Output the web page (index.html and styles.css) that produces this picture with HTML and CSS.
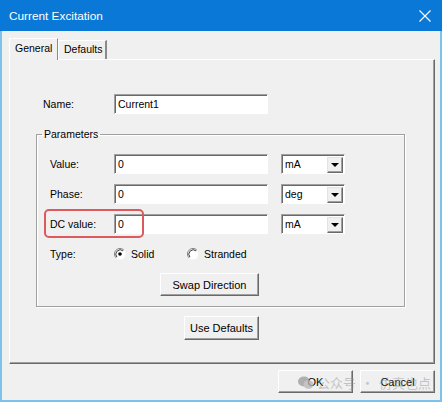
FILE: index.html
```html
<!DOCTYPE html>
<html>
<head>
<meta charset="utf-8">
<link rel="stylesheet" href="styles.css">
</head>
<body>
<div class="window">
  <div class="titlebar">
    <span class="title">Current Excitation</span>
    <svg class="close" width="12" height="12" viewBox="0 0 12 12"><path d="M0.5 0.5 L11.5 11.5 M11.5 0.5 L0.5 11.5" stroke="#fff" stroke-width="1.1" fill="none"/></svg>
  </div>
  <div class="client">
    <div class="tabs">
      <div class="tab active">General</div>
      <div class="tab">Defaults</div>
    </div>
    <div class="panel">
      <div class="name-row">
        <span class="lbl name-lbl">Name:</span>
        <div class="edit">Current1</div>
      </div>
      <fieldset class="group">
        <legend>Parameters</legend>
        <div class="grid">
          <span class="lbl">Value:</span>
          <div class="edit">0</div>
          <div class="combo"><span>mA</span><span class="drop"><i></i></span></div>

          <span class="lbl">Phase:</span>
          <div class="edit">0</div>
          <div class="combo"><span>deg</span><span class="drop"><i></i></span></div>

          <span class="lbl">DC value:</span>
          <div class="edit">0</div>
          <div class="combo"><span>mA</span><span class="drop"><i></i></span></div>

          <span class="lbl">Type:</span>
          <div class="radios">
            <span class="radio on"><svg width="12" height="12" viewBox="0 0 12 12"><circle cx="6" cy="6" r="5.5" fill="#fff"/><path d="M2.1 9.9 A5.5 5.5 0 0 1 9.9 2.1" stroke="#808080" stroke-width="1" fill="none"/><path d="M2.9 9.1 A4.4 4.4 0 0 1 9.1 2.9" stroke="#404040" stroke-width="1" fill="none"/><circle cx="6" cy="6" r="1.8" fill="#000"/></svg>Solid</span>
            <span class="radio"><svg width="12" height="12" viewBox="0 0 12 12"><circle cx="6" cy="6" r="5.5" fill="#fff"/><path d="M2.1 9.9 A5.5 5.5 0 0 1 9.9 2.1" stroke="#808080" stroke-width="1" fill="none"/><path d="M2.9 9.1 A4.4 4.4 0 0 1 9.1 2.9" stroke="#404040" stroke-width="1" fill="none"/></svg>Stranded</span>
          </div>
        </div>
        <div class="swap-row"><button class="btn swap">Swap Direction</button></div>
      </fieldset>
      <div class="defaults-row"><button class="btn defaults">Use Defaults</button></div>
      <div class="highlight"></div>
    </div>
    <div class="footer">
      <button class="btn ok">OK</button>
      <button class="btn cancel">Cancel</button>
    </div>
  </div>
  <div class="watermark">
    <svg width="16" height="14" viewBox="0 0 16 14"><ellipse cx="6" cy="5.5" rx="6" ry="5" fill="#9a9a9a"/><ellipse cx="10.5" cy="8.5" rx="5" ry="4.2" fill="#b5b5b5"/></svg>
    <span>公众号</span><span class="dot">·</span><span>仿真也点</span>
  </div>
</div>
</body>
</html>
```

FILE: styles.css
```css
* { box-sizing: border-box; }
html, body { margin: 0; padding: 0; }
body {
  width: 442px;
  height: 402px;
  overflow: hidden;
  font-family: "Liberation Sans", Arial, sans-serif;
  font-size: 10.5px;
  color: #000;
  background: #f0f0f0;
}
.window {
  position: relative;
  width: 442px;
  height: 402px;
  display: flex;
  flex-direction: column;
}
.titlebar {
  height: 31px;
  flex: none;
  background: #0a78d6;
  display: flex;
  align-items: center;
  justify-content: space-between;
  padding: 0 10px 0 9px;
}
.title {
  color: #fff;
  font-size: 11.8px;
  padding-top: 1px;
}
.close { display: block; margin-right: 1px; }
.client {
  flex: 1;
  background: #f0f0f0;
  border: 2px solid #7cc2ea;
  border-top: none;
  padding: 7px 0 0 7px;
  display: flex;
  flex-direction: column;
}
.tabs {
  display: flex;
  align-items: flex-end;
  height: 21px;
  position: relative;
  z-index: 2;
}
.tab {
  height: 19px;
  width: 49px;
  padding-left: 5px;
  line-height: 17px;
  border-top: 1px solid #fff;
  border-left: 1px solid #fff;
  border-right: 2px solid #8a8a8a;
  background: #f0f0f0;
}
.tab.active {
  height: 22px;
  margin-bottom: -1px;
  padding-left: 5px;
  line-height: 19px;
  border-right: 1px solid #8a8a8a;
}
.panel {
  position: relative;
  width: 426px;
  height: 305px;
  border-top: 1px solid #fff;
  border-left: 1px solid #fff;
  border-right: 1px solid #6a6a6a;
  border-bottom: 1px solid #6a6a6a;
  box-shadow: inset -1px -1px 0 #a0a0a0;
  padding: 34px 0 0 26px;
}
.name-row {
  display: flex;
  align-items: center;
  margin-left: 7px;
}
.name-lbl { width: 71px; }
.edit {
  width: 154px;
  height: 20px;
  background: #fff;
  border-top: 1px solid #a0a0a0;
  border-left: 1px solid #a0a0a0;
  border-right: 1px solid #fff;
  border-bottom: 1px solid #fff;
  box-shadow: inset 1px 1px 0 #696969;
  padding: 2px 0 0 3px;
  line-height: 15px;
}
.group {
  margin: 13px 0 0 0;
  width: 369px;
  padding: 13px 0 10px 0;
  border: 1px solid #a0a0a0;
  box-shadow: inset 1px 1px 0 #fff, 1px 1px 0 #fff;
  min-width: 0;
}
.group legend {
  margin-left: 5px;
  padding: 0 2px;
  line-height: 14px;
}
.grid {
  display: grid;
  grid-template-columns: 64px 167px 64px;
  grid-auto-rows: 20px;
  row-gap: 10px;
  align-items: center;
  margin-left: 13px;
}
.combo {
  width: 64px;
  height: 20px;
  background: #fff;
  border-top: 1px solid #a0a0a0;
  border-left: 1px solid #a0a0a0;
  border-right: 1px solid #fff;
  border-bottom: 1px solid #fff;
  box-shadow: inset 1px 1px 0 #696969;
  display: flex;
  justify-content: space-between;
  padding: 2px 1px 1px 3px;
  line-height: 15px;
}
.drop {
  width: 16px;
  height: 16px;
  background: #f0f0f0;
  border-top: 1px solid #e3e3e3;
  border-left: 1px solid #e3e3e3;
  border-right: 1px solid #696969;
  border-bottom: 1px solid #696969;
  box-shadow: inset -1px -1px 0 #a0a0a0;
  display: flex;
  align-items: center;
  justify-content: center;
}
.drop i {
  width: 0;
  height: 0;
  border-left: 4px solid transparent;
  border-right: 4px solid transparent;
  border-top: 4px solid #000;
  margin-right: 1px;
}
.radios {
  display: flex;
  align-items: center;
  grid-column: 2 / 4;
}
.radio {
  display: flex;
  align-items: center;
  gap: 5px;
  width: 73px;
}
.radio svg { display: block; }
.swap-row {
  margin-top: 9px;
  padding-left: 123px;
  height: 23px;
}
.btn {
  font-family: "Liberation Sans", Arial, sans-serif;
  font-size: 11px;
  color: #000;
  background: #f0f0f0;
  border-top: 1px solid #fff;
  border-left: 1px solid #fff;
  border-right: 1px solid #696969;
  border-bottom: 1px solid #696969;
  box-shadow: inset -1px -1px 0 #a0a0a0;
  padding: 0;
  margin: 0;
  display: block;
}
.swap { width: 99px; height: 23px; }
.defaults-row {
  margin-top: 9px;
  padding-left: 148px;
}
.defaults { width: 75px; height: 24px; }
.highlight {
  position: absolute;
  left: 34px;
  top: 149px;
  width: 100px;
  height: 29px;
  border: 2px solid #dc5a5e;
  border-radius: 5px;
}
.footer {
  display: flex;
  justify-content: flex-end;
  gap: 7px;
  margin-top: 6px;
  padding-right: 5px;
}
.ok, .cancel { width: 75px; height: 23px; }
.watermark {
  position: absolute;
  left: 298px;
  top: 375px;
  display: flex;
  align-items: center;
  gap: 3px;
  white-space: nowrap;
  font-family: "Noto Sans CJK SC", sans-serif;
  font-size: 13px;
  line-height: 16px;
  color: rgba(150,150,150,0.5);
  pointer-events: none;
}
.watermark svg { opacity: 0.75; flex: none; }
.watermark .dot { margin: 0 2px; }
```
